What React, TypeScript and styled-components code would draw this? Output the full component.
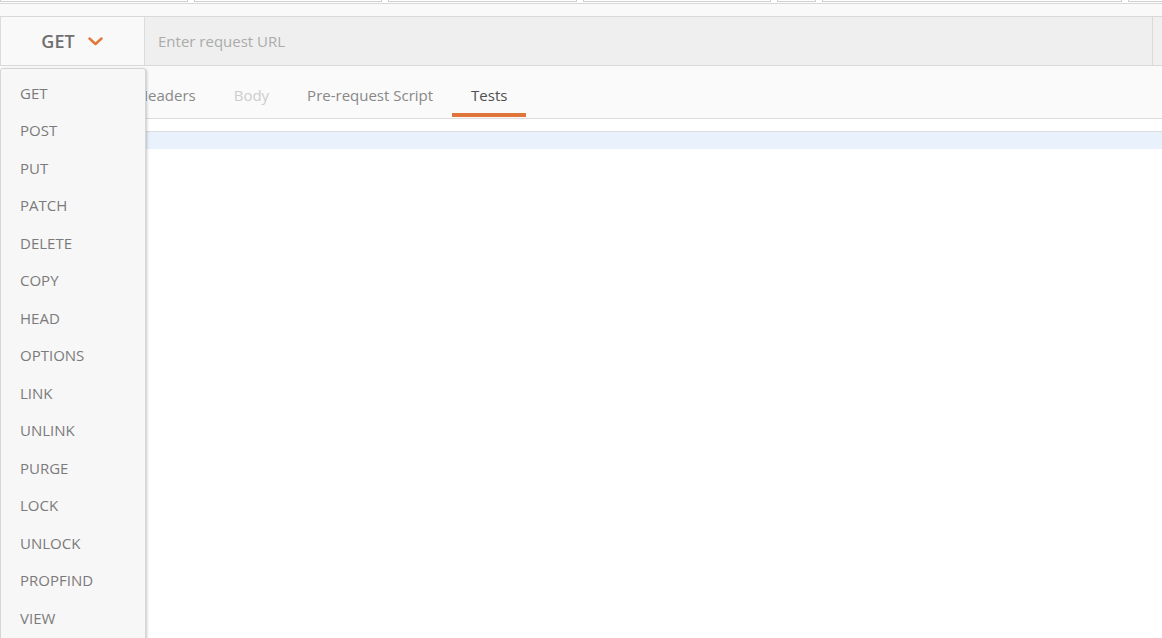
import styled, { createGlobalStyle } from 'styled-components';

const GlobalStyle = createGlobalStyle`
  html, body {
    margin: 0;
    padding: 0;
    background: #fff;
    font-family: 'Open Sans', 'Noto Sans', sans-serif;
    overflow: hidden;
  }
`;

const METHODS = [
  'GET',
  'POST',
  'PUT',
  'PATCH',
  'DELETE',
  'COPY',
  'HEAD',
  'OPTIONS',
  'LINK',
  'UNLINK',
  'PURGE',
  'LOCK',
  'UNLOCK',
  'PROPFIND',
  'VIEW',
];

// widths of the open tabs above, only their bottoms show
const TAB_STUBS = [186, 186, 187, 186, 37, 298, 300];

const ChevronIcon = () => (
  <svg width='15' height='9' viewBox='0 0 15 9' fill='none'>
    <path d='M1.5 1.5 L7.5 7 L13.5 1.5' stroke='#e0793a' strokeWidth='2.5' strokeLinecap='round' strokeLinejoin='round' />
  </svg>
);

const App = () => {
  return (
    <Page>
      <GlobalStyle />
      <TabStrip>
        {TAB_STUBS.map((w, i) => (
          <TabStub key={i} $width={w} />
        ))}
      </TabStrip>
      <Band />
      <RequestBar>
        <MethodButton>
          GET
          <ChevronIcon />
        </MethodButton>
        <UrlInput placeholder='Enter request URL' />
        <SendStub />
      </RequestBar>
      <TabList>
        <Tab>Headers</Tab>
        <Tab $disabled>Body</Tab>
        <Tab>Pre-request Script</Tab>
        <Tab $active>Tests</Tab>
      </TabList>
      <Editor>
        <EditorLine />
      </Editor>
      <MethodMenu>
        {METHODS.map((m) => (
          <MenuItem key={m}>{m}</MenuItem>
        ))}
      </MethodMenu>
    </Page>
  );
};

const Page = styled.div`
  position: relative;
  width: 1162px;
  height: 638px;
  overflow: hidden;
  background: #fff;
`;

const TabStrip = styled.div`
  display: flex;
  gap: 6px;
  height: 3px;
  border-bottom: 1px solid #d8d8d8;
  overflow: hidden;
`;

const TabStub = styled.div<{ $width: number }>`
  flex: none;
  width: ${(p) => p.$width}px;
  height: 1px;
  border: 1px solid #cfcfcf;
  border-top: none;
  background: #fff;
`;

const Band = styled.div`
  height: 12px;
  background: #f9f9f9;
`;

const RequestBar = styled.div`
  display: flex;
  height: 48px;
  border-top: 1px solid #d9d9d9;
  border-bottom: 1px solid #d9d9d9;
  background: #efefef;
`;

const MethodButton = styled.div`
  flex: none;
  width: 145px;
  display: flex;
  align-items: center;
  justify-content: center;
  gap: 13px;
  padding-right: 1px;
  box-sizing: border-box;
  background: #f9f9f9;
  border-left: 1px solid #dcdcdc;
  border-right: 1px solid #dcdcdc;
  font-size: 18px;
  font-weight: 600;
  color: #707070;
`;

const UrlInput = styled.input`
  flex: 1;
  border: none;
  outline: none;
  background: transparent;
  padding: 0 0 0 13px;
  font-family: 'Open Sans', 'Noto Sans', sans-serif;
  font-size: 15px;
  color: #505050;

  &::placeholder {
    color: #ababab;
  }
`;

const SendStub = styled.div`
  flex: none;
  width: 9px;
  border-left: 1px solid #dadada;
  background: #f0f0f0;
`;

const TabList = styled.div`
  display: flex;
  height: 52px;
  padding-left: 118px;
  background: #fafafa;
  border-bottom: 1px solid #dcdcdc;
`;

const Tab = styled.div<{ $active?: boolean; $disabled?: boolean }>`
  display: flex;
  align-items: center;
  padding: 11px 19px 0;
  font-size: 15px;
  color: ${(p) => (p.$active ? '#4f4f4f' : p.$disabled ? '#cdcdcd' : '#888')};
  border-bottom: 4px solid ${(p) => (p.$active ? '#e0753a' : 'transparent')};
  margin-bottom: 1px;
`;

const Editor = styled.div`
  padding-top: 12px;
`;

const EditorLine = styled.div`
  height: 17px;
  border-top: 1px solid #dcdcdc;
  background: #e8f1fc;
`;

const MethodMenu = styled.div`
  position: absolute;
  top: 68px;
  left: 0;
  width: 146px;
  height: 600px;
  box-sizing: border-box;
  padding-top: 5px;
  background: #f7f7f7;
  border: 1px solid #d6d6d6;
  border-radius: 3px;
  box-shadow: 1px 1px 3px rgba(0, 0, 0, 0.22);
`;

const MenuItem = styled.div`
  height: 37.5px;
  display: flex;
  align-items: center;
  padding-left: 19px;
  font-size: 15px;
  color: #7b7b7b;
`;

export default App;
